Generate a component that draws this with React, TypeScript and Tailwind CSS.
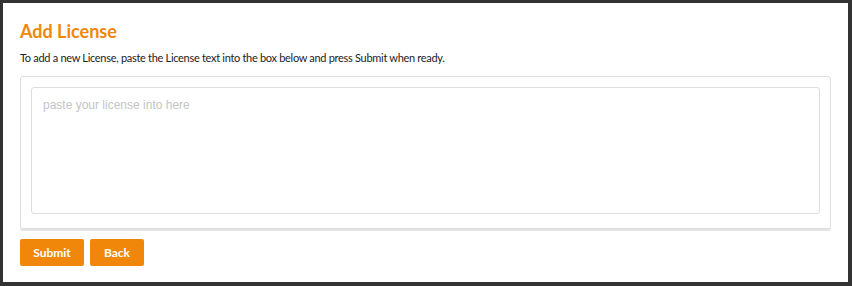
import React, { useState } from 'react';

const App: React.FC = () => {
  const [license, setLicense] = useState<string>('');

  return (
    <div className="h-[286px] w-[852px] bg-[#333333] p-[3px] pr-[4px] pb-[4px]">
      <div className="h-full w-full bg-white px-[17px] pt-[15px] font-['Lato',sans-serif]">
        <h1 className="text-[18px] font-bold leading-[26px] text-[#f0870a]">Add License</h1>
        <p className="mt-[7px] text-[11px] leading-[14px] tracking-[-0.3px] text-[#222]">
          To add a new License, paste the License text into the box below and press Submit when ready.
        </p>

        {/* license box */}
        <div className="mt-[11px] rounded-[3px] border border-[#dddddd] p-[10px] pb-[14px] shadow-[0_2px_0_#e4e4e4]">
          <textarea
            value={license}
            onChange={(e) => setLicense(e.target.value)}
            placeholder="paste your license into here"
            className="block h-[127px] w-full resize-none rounded-[3px] border border-[#dddddd] px-[11px] py-[8px] font-['Liberation_Sans',Arial,sans-serif] text-[12px] text-[#333] outline-none placeholder:text-[#c4c4c4]"
          />
        </div>

        <div className="mt-[10px] flex gap-[6px]">
          <button className="h-[27px] w-[64px] rounded-[2px] bg-[#f0870a] text-[12px] font-bold text-white">
            Submit
          </button>
          <button className="h-[27px] w-[54px] rounded-[2px] bg-[#f0870a] text-[12px] font-bold text-white">
            Back
          </button>
        </div>
      </div>
    </div>
  );
};

export default App;
